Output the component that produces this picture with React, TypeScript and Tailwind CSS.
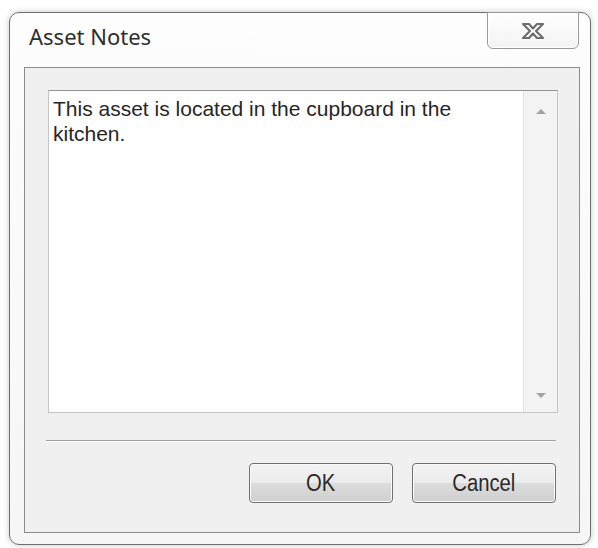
export default function App() {
  return (
    <div className="w-[598px] h-[548px] bg-white pl-[9px] pt-[12px]">
      <div className="w-[582px] h-[533px] rounded-[10px] border border-[#6f6f6f] bg-[linear-gradient(#fdfdfd,#f6f6f6)] shadow-[0_0_6px_rgba(0,0,0,0.22)] flex flex-col">
        {/* Title bar */}
        <div className="h-[54px] flex items-start justify-between">
          <span className="ml-[19px] mt-[8px] text-[22px] leading-[30px] text-[#2e2e2e] font-['Noto_Sans',sans-serif]">
            Asset Notes
          </span>
          <div className="-mt-px mr-[11px] w-[92px] h-[37px] rounded-b-[6px] border border-[#9a9a9a] bg-[linear-gradient(#ffffff,#f3f3f3)] shadow-[inset_0_0_0_1px_#ffffff] flex items-center justify-center">
            <svg width="24" height="18" viewBox="0 0 24 18">
              <polygon
                points="2,2 8,2 12,6.5 16,2 22,2 15,9 22,16 16,16 12,11.5 8,16 2,16 9,9"
                fill="#ffffff"
                stroke="#6e6e6e"
                strokeWidth="2.2"
                strokeLinejoin="round"
              />
            </svg>
          </div>
        </div>

        {/* Client area */}
        <div className="ml-[14px] mr-[10px] mb-[11px] flex-1 border border-[#8c8c8c] bg-[#f0f0f0] flex flex-col">
          {/* Notes box */}
          <div className="ml-[23px] mt-[22px] w-[510px] h-[323px] border border-[#c4c4c4] border-t-[#939393] bg-white flex">
            <div className="flex-1 pl-[4px] pt-[5px] text-[21px] leading-[25px] text-[#262626] font-['Liberation_Sans',Arial,sans-serif]">
              This asset is located in the cupboard in the
              <br />
              kitchen.
            </div>
            <div className="w-[34px] bg-[#f3f3f3] border-l border-[#e4e4e4] flex flex-col justify-between">
              <div className="h-[40px] flex items-center justify-center">
                <div className="w-0 h-0 border-x-[5px] border-x-transparent border-b-[5px] border-b-[#a3a3a3]" />
              </div>
              <div className="h-[34px] flex items-center justify-center">
                <div className="w-0 h-0 border-x-[5px] border-x-transparent border-t-[5px] border-t-[#a3a3a3]" />
              </div>
            </div>
          </div>

          {/* Separator */}
          <div className="ml-[21px] mt-[27px] w-[510px] border-t border-[#a0a0a0] border-b border-b-white" />

          {/* Buttons */}
          <div className="mt-[21px] mr-[23px] flex justify-end gap-[19px]">
            <button className="w-[144px] h-[40px] rounded-[4px] border border-[#707070] bg-[linear-gradient(#f3f3f3,#ebebeb_50%,#dddddd_50%,#cfcfcf)] shadow-[inset_0_0_0_1px_#fbfbfb] flex items-center justify-center text-[23px] text-[#2a2a2a] font-['Liberation_Sans',sans-serif]">
              <span className="inline-block scale-x-[0.88]">OK</span>
            </button>
            <button className="w-[144px] h-[40px] rounded-[4px] border border-[#707070] bg-[linear-gradient(#f3f3f3,#ebebeb_50%,#dddddd_50%,#cfcfcf)] shadow-[inset_0_0_0_1px_#fbfbfb] flex items-center justify-center text-[23px] text-[#2a2a2a] font-['Liberation_Sans',sans-serif]">
              <span className="inline-block scale-x-[0.88]">Cancel</span>
            </button>
          </div>
        </div>
      </div>
    </div>
  );
}
